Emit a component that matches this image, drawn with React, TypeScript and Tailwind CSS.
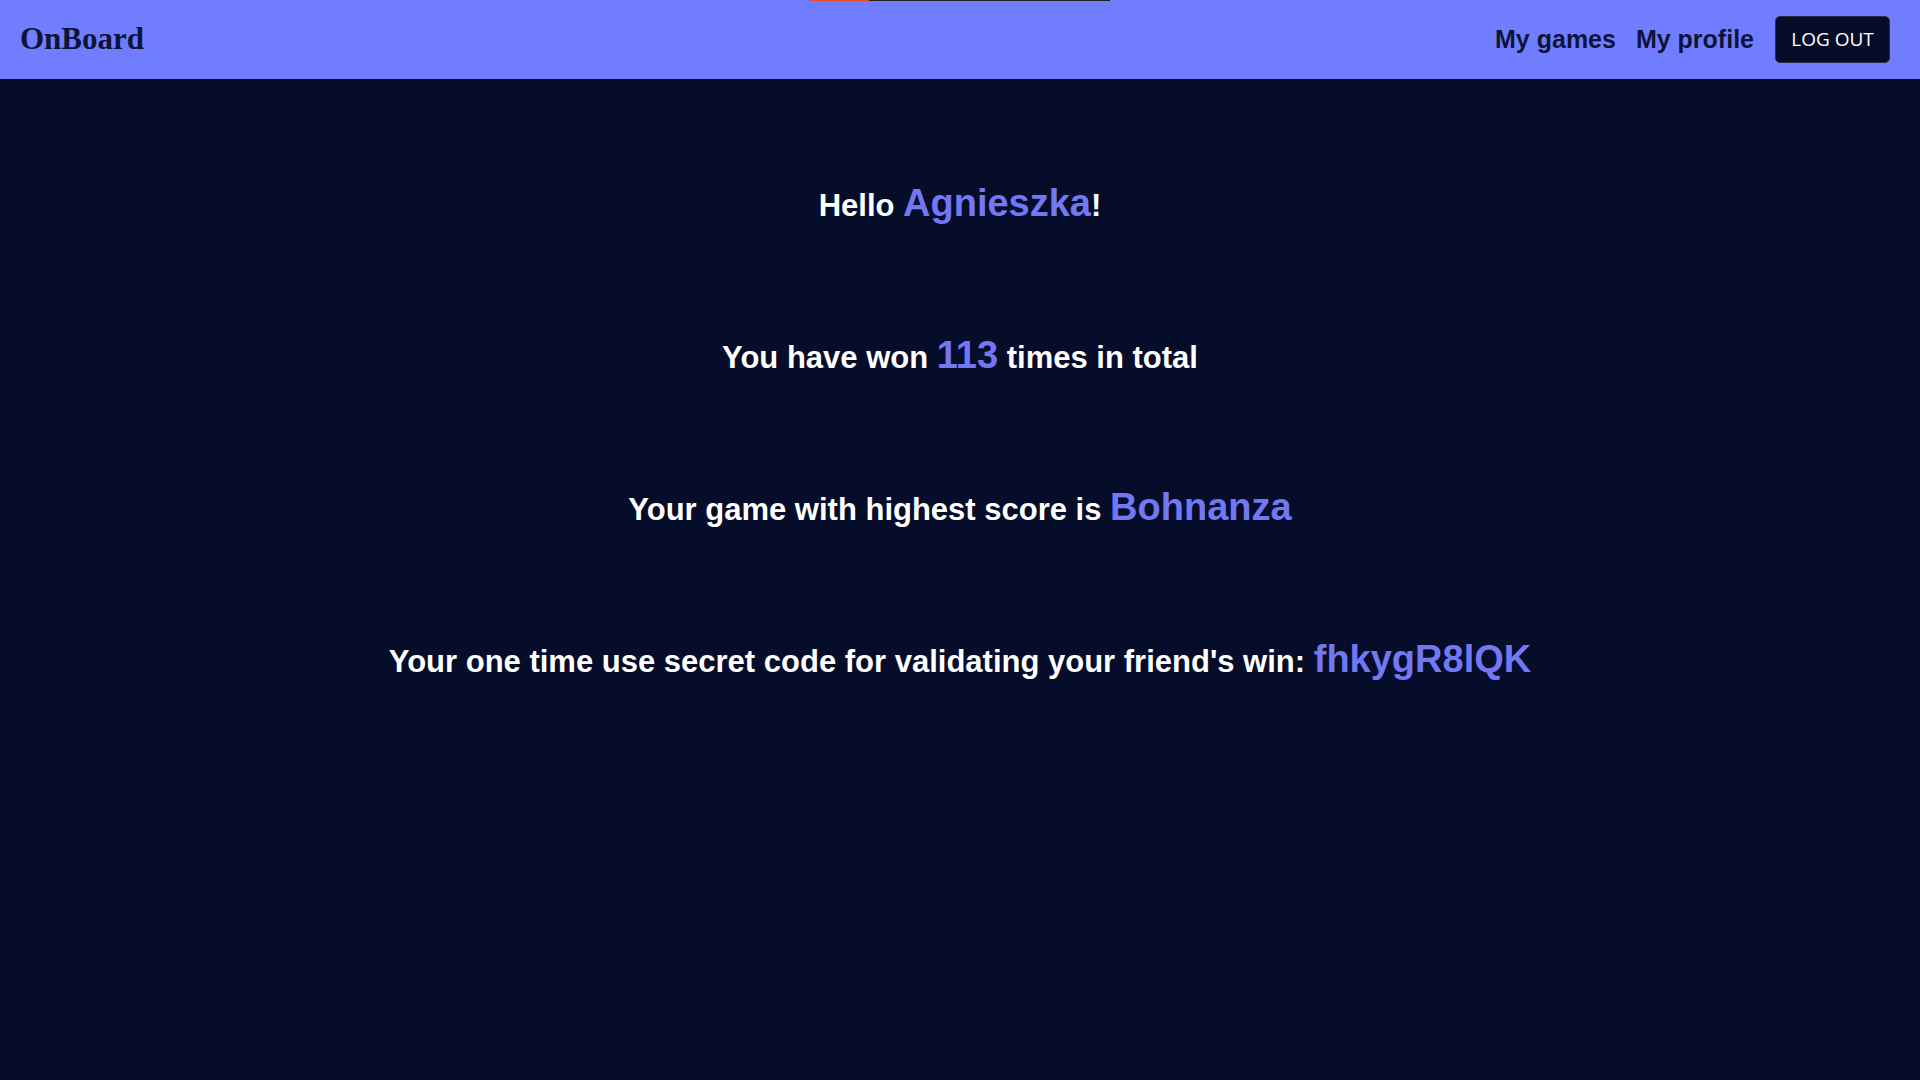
export default function App() {
  return (
    <div className="min-h-screen bg-[#060d2a] font-['Liberation_Sans',Arial,sans-serif]">
      {/* Navbar */}
      <header className="relative flex h-[79px] items-center justify-between bg-[#717dff] pl-5 pr-[30px]">
        {/* thin loading bar at the very top */}
        <div className="absolute left-[809px] top-0 flex h-px w-[301px]">
          <div className="w-[60px] bg-[#e0502a]"></div>
          <div className="flex-1 bg-[#222222]"></div>
        </div>

        <div className="font-['Liberation_Serif','Times_New_Roman',serif] text-[31px] font-bold text-[#0e1438]">
          OnBoard
        </div>

        <nav className="flex items-center gap-5">
          <a className="text-[25px] font-bold text-[#0e1438]">My games</a>
          <a className="text-[25px] font-bold text-[#0e1438]">My profile</a>
          <button className="ml-px h-[47px] w-[115px] rounded-[5px] border border-[#2a2f48] bg-[#060d2a] font-['Open_Sans','Noto_Sans',sans-serif] text-[19px] text-white">
            LOG OUT
          </button>
        </nav>
      </header>

      {/* Stats */}
      <main className="flex flex-col items-center pt-[99px] text-[31px] font-bold text-white">
        <h2 className="h-[152px] leading-[50px]">
          Hello <span className="text-[38px] text-[#7278f2]">Agnieszka</span>!
        </h2>
        <h2 className="h-[152px] leading-[50px]">
          You have won <span className="text-[38px] text-[#7278f2]">113</span> times in total
        </h2>
        <h2 className="h-[152px] leading-[50px]">
          Your game with highest score is{" "}
          <span className="text-[38px] text-[#7278f2]">Bohnanza</span>
        </h2>
        <h2 className="h-[152px] leading-[50px]">
          Your one time use secret code for validating your friend's win:{" "}
          <span className="text-[38px] text-[#7278f2]">fhkygR8lQK</span>
        </h2>
      </main>
    </div>
  );
}
